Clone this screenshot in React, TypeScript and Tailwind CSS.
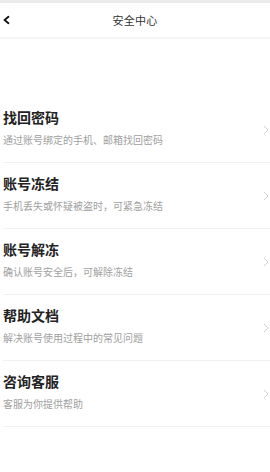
import React from "react";

const items = [
  { title: "找回密码", desc: "通过账号绑定的手机、邮箱找回密码" },
  { title: "账号冻结", desc: "手机丢失或怀疑被盗时，可紧急冻结" },
  { title: "账号解冻", desc: "确认账号安全后，可解除冻结" },
  { title: "帮助文档", desc: "解决账号使用过程中的常见问题" },
  { title: "咨询客服", desc: "客服为你提供帮助" },
];

function Chevron({ className }: { className?: string }) {
  return (
    <svg viewBox="0 0 6 10" className={className} fill="none">
      <path d="M0.8 0.8 L5 5 L0.8 9.2" stroke="currentColor" strokeWidth="1" />
    </svg>
  );
}

export default function App() {
  return (
    <div
      className="w-[270px] h-[472px] bg-white overflow-hidden"
      style={{ fontFamily: '"Noto Sans CJK SC", "Noto Sans", sans-serif' }}
    >
      {/* status strip */}
      <div className="h-[3px] bg-[#ebebeb]" />

      {/* header */}
      <div className="relative h-[36px] flex items-center justify-center border-b-2 border-[#f6f6f6]">
        <button className="absolute left-[3px] top-1/2 -translate-y-1/2 text-[#111]">
          <svg viewBox="0 0 7 9" className="w-[7px] h-[9px]" fill="none">
            <path d="M6 0.8 L1.6 4.5 L6 8.2" stroke="currentColor" strokeWidth="1.8" />
          </svg>
        </button>
        <span className="text-[11px] text-[#333] tracking-[0.3px]">安全中心</span>
      </div>

      {/* list */}
      <div className="mt-[58px]">
        {items.map((item) => (
          <div key={item.title} className="ml-[3px] h-[66px] flex items-center border-b border-[#f2f2f2]">
            <div className="flex-1 flex flex-col pb-[5px]">
              <span className="text-[14px] leading-[20px] font-bold text-[#222]">{item.title}</span>
              <span className="mt-[6px] text-[10px] leading-[14px] text-[#a0a0a0]">{item.desc}</span>
            </div>
            <Chevron className="w-[6px] h-[10px] mr-[1px] text-[#d0d0d0]" />
          </div>
        ))}
      </div>
    </div>
  );
}
